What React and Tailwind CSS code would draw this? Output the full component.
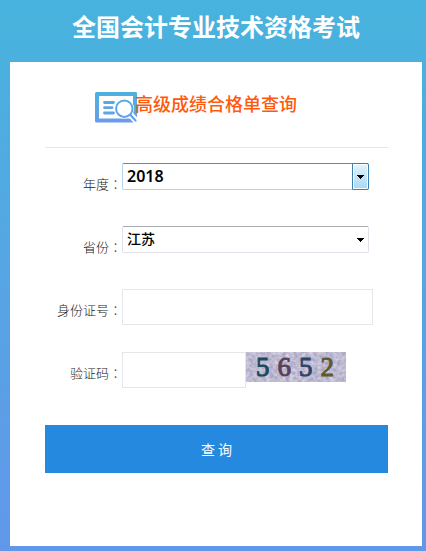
import React, { useState } from "react";

const YEARS = ["2018", "2017", "2016", "2015"];
const PROVINCES = ["江苏", "浙江", "上海", "安徽"];

const CAPTCHA = [
  { char: "5", color: "#1f4a58" },
  { char: "6", color: "#5b4256" },
  { char: "5", color: "#2f4568" },
  { char: "2", color: "#5f5a2c" },
];

function SearchIcon() {
  return (
    <svg width="43" height="32" viewBox="0 0 43 32" fill="none" aria-hidden="true" className="shrink-0">
      <defs>
        <linearGradient id="cardFill" x1="0" y1="0" x2="0" y2="32" gradientUnits="userSpaceOnUse">
          <stop offset="0" stopColor="#4bb2df" />
          <stop offset="1" stopColor="#6b9bec" />
        </linearGradient>
      </defs>
      <path
        d="M1.500 1h39.500a1 1 0 0 1 1 1v28.500a1 1 0 0 1-1 1H1.500a1.500 1.500 0 0 1-1.500-1.500V2.500A1.500 1.500 0 0 1 1.500 1zM4 5v22.500h34V5z"
        fill="url(#cardFill)"
        fillRule="evenodd"
      />
      <path d="M9.500 11.500h9M9.500 16.700h7.500M9.500 22h9" stroke="url(#cardFill)" strokeWidth="2.800" strokeLinecap="round" />
      <path d="M34 22l8 9" stroke="#fff" strokeWidth="6" />
      <circle cx="29.300" cy="17.700" r="9.800" fill="#fff" />
      <circle cx="29.300" cy="17.700" r="8.200" stroke="url(#cardFill)" strokeWidth="2" />
      <path d="M35.500 24l5 5.500" stroke="url(#cardFill)" strokeWidth="2.200" strokeLinecap="round" />
    </svg>
  );
}

function Arrow() {
  return (
    <svg width="7" height="4" viewBox="0 0 7 4" shapeRendering="crispEdges" aria-hidden="true">
      <path d="M0 0h7v1H6v1H5v1H4v1H3V3H2V2H1V1H0z" fill="#000" />
    </svg>
  );
}

function Row({ id, label, children }) {
  return (
    <div className="flex h-9 items-start">
      <label htmlFor={id} className="w-[77px] shrink-0 pt-3 text-right text-[13px] leading-[18px] font-light whitespace-nowrap text-[#222]">
        {label}
        <span className="font-['Noto_Sans_CJK_TC',sans-serif] text-[#555]">：</span>
      </label>
      {children}
    </div>
  );
}

function Captcha() {
  return (
    <div className="relative h-[30px] w-[100px] shrink-0 overflow-hidden bg-[#bdbed3]">
      <svg width="100" height="30" className="absolute inset-0" aria-hidden="true">
        <filter id="grain" x="0" y="0" width="100%" height="100%" colorInterpolationFilters="sRGB">
          <feTurbulence type="fractalNoise" baseFrequency="0.25 0.3" numOctaves="3" seed="7" />
          <feColorMatrix values="0.3 0.15 0 0 0.52  0.3 0.1 0 0 0.53  0.25 0 0.1 0 0.65  0 0 0 0 1" />
        </filter>
        <rect width="100" height="30" filter="url(#grain)" />
      </svg>
      <div className="relative flex h-full items-center justify-between pr-3 pl-2.5 font-['Liberation_Serif',serif] text-[27px] leading-[30px]">
        {CAPTCHA.map((item, index) => (
          <span key={index} className="[-webkit-text-stroke:1px]" style={{ color: item.color }}>
            {item.char}
          </span>
        ))}
      </div>
    </div>
  );
}

export default function App() {
  const [year, setYear] = useState("2018");
  const [province, setProvince] = useState("江苏");
  const [idNumber, setIdNumber] = useState("");
  const [code, setCode] = useState("");

  return (
    <div className="flex min-h-screen flex-col bg-gradient-to-b from-[#47b3dd] to-[#6197ea] pr-1 pb-[5px] pl-2.5 font-['Noto_Sans_CJK_SC',sans-serif]">
      <h1 className="pt-2 pb-[18px] text-center text-2xl leading-9 font-bold text-white">全国会计专业技术资格考试</h1>

      <main className="flex-1 bg-white pr-[34px] pl-[35px]">
        <div className="flex items-start border-b border-[#e6e6e6] pt-[29px] pb-[24px] pl-[50px]">
          <SearchIcon />
          <h2 className="-ml-[3px] text-lg leading-6 font-medium whitespace-nowrap text-[#ff5a0c]">高级成绩合格单查询</h2>
        </div>

        <form className="pt-[15px]" onSubmit={(e) => e.preventDefault()}>
          <div className="flex flex-col gap-[27px]">
            <Row id="year" label="年度">
              <div className="relative w-full max-w-[247px]">
                <select
                  id="year"
                  value={year}
                  onChange={(e) => setYear(e.target.value)}
                  className="block h-[27px] w-full appearance-none rounded-[2px] border border-[#b5d3ea] border-t-[#4f8fc0] bg-white pb-[2px] pl-1 font-['Noto_Sans','Noto_Sans_CJK_SC',sans-serif] text-base leading-5 font-semibold text-black outline-none"
                >
                  {YEARS.map((item) => (
                    <option key={item}>{item}</option>
                  ))}
                </select>
                <span className="pointer-events-none absolute inset-y-0 right-0 flex w-[17px] items-center justify-center rounded-r-[2px] border border-[#3c7fb1] bg-gradient-to-b from-[#e3f4fc] to-[#a6d9f4] inset-ring inset-ring-white">
                  <Arrow />
                </span>
              </div>
            </Row>

            <Row id="province" label="省份">
              <div className="relative w-full max-w-[247px]">
                <select
                  id="province"
                  value={province}
                  onChange={(e) => setProvince(e.target.value)}
                  className="block h-[27px] w-full appearance-none rounded-[2px] border border-[#dfe2ea] border-t-[#abadb3] bg-white pb-1 pl-1 text-sm leading-5 font-medium text-black outline-none"
                >
                  {PROVINCES.map((item) => (
                    <option key={item}>{item}</option>
                  ))}
                </select>
                <span className="pointer-events-none absolute inset-y-0 right-0 flex w-[17px] items-center justify-center">
                  <Arrow />
                </span>
              </div>
            </Row>

            <Row id="idNumber" label="身份证号">
              <input
                id="idNumber"
                type="text"
                value={idNumber}
                onChange={(e) => setIdNumber(e.target.value)}
                className="h-9 w-full max-w-[251px] border border-[#e6e6e6] bg-white px-2 text-sm outline-none"
              />
            </Row>

            <Row id="code" label="验证码">
              <input
                id="code"
                type="text"
                value={code}
                onChange={(e) => setCode(e.target.value)}
                className="h-9 w-[124px] border border-[#e6e6e6] bg-white px-2 text-sm outline-none"
              />
              <Captcha />
            </Row>
          </div>

          <button type="submit" className="mt-[37px] block h-12 w-full bg-[#2589e0] text-sm text-white">
            查 询
          </button>
        </form>
      </main>
    </div>
  );
}
